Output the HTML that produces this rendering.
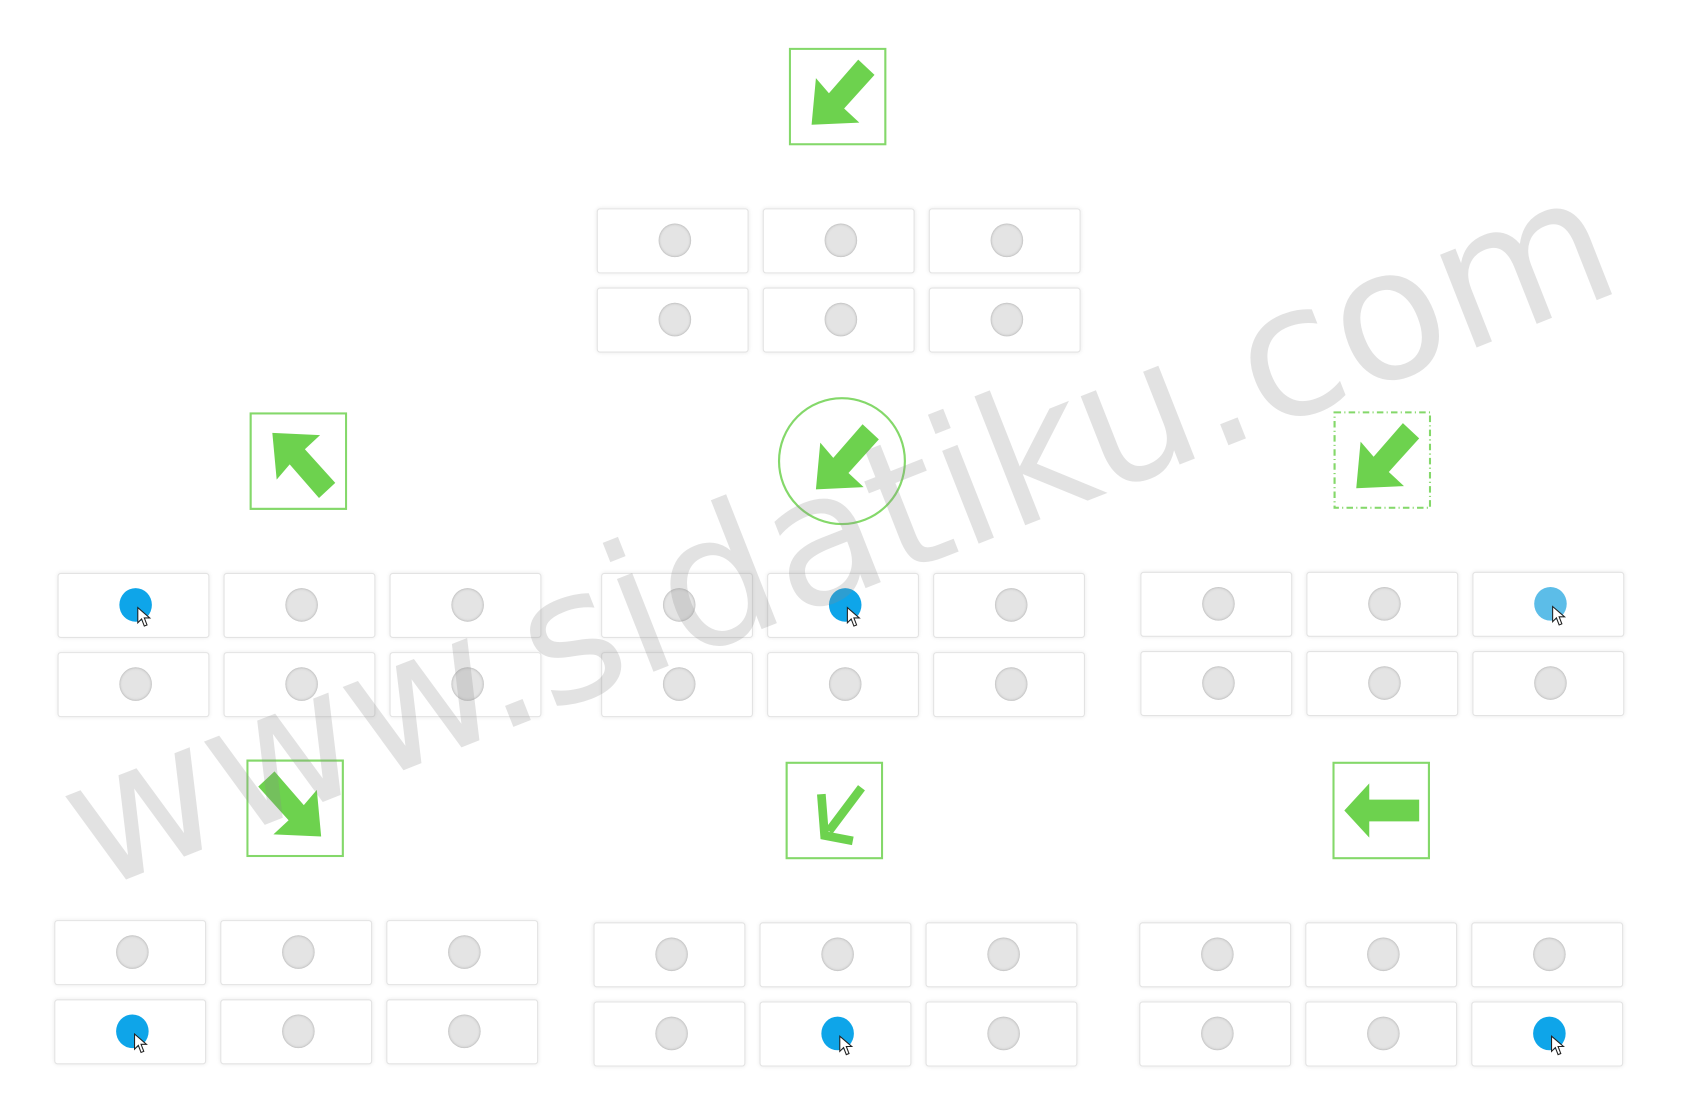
<!DOCTYPE html>
<html><head><meta charset="utf-8"><style>
html,body{margin:0;padding:0;background:#fff;overflow:hidden}
body{width:1702px;height:1119px;position:relative}
#c{position:absolute;left:0;top:0;width:1550px;height:1019px;transform:scale(1.085);transform-origin:0 0}
.cell{position:absolute;width:138px;height:58px;border:1px solid #e3e3e3;border-radius:3px;background:#fff;box-shadow:0 0 4px rgba(0,0,0,0.08)}
.r{position:absolute;left:56px;top:13px;width:30px;height:31px;border-radius:50%;background:radial-gradient(circle at 50% 50%,#e4e4e4 55%,#cfcfcf 100%);box-shadow:inset 0 0 2px rgba(0,0,0,.25)}
.r.on{background:#0ea5e9;box-shadow:none}
.r.lt{background:#5cbde8;box-shadow:none}
.cur{position:absolute;left:72px;top:30px}
.ic{position:absolute;width:90px;height:90px}
#wm{position:absolute;left:66px;top:684px;font-family:"DejaVu Sans","Liberation Sans",sans-serif;font-size:168px;color:rgba(140,140,140,0.25);transform:rotate(-21.5deg);transform-origin:0 50%;white-space:nowrap;line-height:1}
</style></head><body><div id="c">

<svg class="ic" style="left:727px;top:44px" viewBox="0 0 90 90"><rect x="1" y="1" width="88" height="88" fill="none" stroke="#84d86a" stroke-width="2"/><path d="M21,71 L25,28 L37,42 L64,11 L79,25 L51,56 L65,69 Z" fill="#6dd24e"/></svg>
<svg class="ic" style="left:230px;top:380px" viewBox="0 0 90 90"><rect x="1" y="1" width="88" height="88" fill="none" stroke="#84d86a" stroke-width="2"/><path d="M21,19 L25,62 L37,48 L64,79 L79,65 L51,34 L65,21 Z" fill="#6dd24e"/></svg>
<svg class="ic" style="left:716px;top:365px;width:120px;height:120px" viewBox="0 0 120 120"><circle cx="60" cy="60" r="58" fill="none" stroke="#84d86a" stroke-width="2"/><path d="M36,86 L40,43 L52,57 L79,26 L94,40 L66,71 L80,84 Z" fill="#6dd24e"/></svg>
<svg class="ic" style="left:1229px;top:379px" viewBox="0 0 90 90"><rect x="1" y="1" width="88" height="88" fill="none" stroke="#84d86a" stroke-width="2" stroke-dasharray="6 3 1 3"/><path d="M21,71 L25,28 L37,42 L64,11 L79,25 L51,56 L65,69 Z" fill="#6dd24e"/></svg>
<svg class="ic" style="left:227px;top:700px" viewBox="0 0 90 90"><rect x="1" y="1" width="88" height="88" fill="none" stroke="#84d86a" stroke-width="2"/><path d="M69,71 L65,28 L53,42 L26,11 L11,25 L39,56 L25,69 Z" fill="#6dd24e"/></svg>
<svg class="ic" style="left:724px;top:702px" viewBox="0 0 90 90"><rect x="1" y="1" width="88" height="88" fill="none" stroke="#84d86a" stroke-width="2"/><path d="M70,24 L40,64 M33,30 L36,68 L62,73" fill="none" stroke="#6dd24e" stroke-width="8"/></svg>
<svg class="ic" style="left:1228px;top:702px" viewBox="0 0 90 90"><rect x="1" y="1" width="88" height="88" fill="none" stroke="#84d86a" stroke-width="2"/><path d="M11,45 L34,20 L34,35 L80,35 L80,55 L34,55 L34,70 Z" fill="#6dd24e"/></svg>

<div class="cell" style="left:550px;top:192px"><div class="r"></div></div>
<div class="cell" style="left:703px;top:192px"><div class="r"></div></div>
<div class="cell" style="left:856px;top:192px"><div class="r"></div></div>
<div class="cell" style="left:550px;top:265px"><div class="r"></div></div>
<div class="cell" style="left:703px;top:265px"><div class="r"></div></div>
<div class="cell" style="left:856px;top:265px"><div class="r"></div></div>

<div class="cell" style="left:53px;top:528px"><div class="r on"></div><svg class="cur" width="14" height="20" viewBox="0 0 14 20"><path d="M1,1 L1,15 L4.5,11.5 L7,18 L9.5,17 L7,10.5 L12,10.5 Z" fill="#fff" stroke="#222" stroke-width="1"/></svg></div>
<div class="cell" style="left:206px;top:528px"><div class="r"></div></div>
<div class="cell" style="left:359px;top:528px"><div class="r"></div></div>
<div class="cell" style="left:53px;top:601px"><div class="r"></div></div>
<div class="cell" style="left:206px;top:601px"><div class="r"></div></div>
<div class="cell" style="left:359px;top:601px"><div class="r"></div></div>
<div class="cell" style="left:554px;top:528px"><div class="r"></div></div>
<div class="cell" style="left:707px;top:528px"><div class="r on"></div><svg class="cur" width="14" height="20" viewBox="0 0 14 20"><path d="M1,1 L1,15 L4.5,11.5 L7,18 L9.5,17 L7,10.5 L12,10.5 Z" fill="#fff" stroke="#222" stroke-width="1"/></svg></div>
<div class="cell" style="left:860px;top:528px"><div class="r"></div></div>
<div class="cell" style="left:554px;top:601px"><div class="r"></div></div>
<div class="cell" style="left:707px;top:601px"><div class="r"></div></div>
<div class="cell" style="left:860px;top:601px"><div class="r"></div></div>
<div class="cell" style="left:1051px;top:527px"><div class="r"></div></div>
<div class="cell" style="left:1204px;top:527px"><div class="r"></div></div>
<div class="cell" style="left:1357px;top:527px"><div class="r lt"></div><svg class="cur" width="14" height="20" viewBox="0 0 14 20"><path d="M1,1 L1,15 L4.5,11.5 L7,18 L9.5,17 L7,10.5 L12,10.5 Z" fill="#fff" stroke="#222" stroke-width="1"/></svg></div>
<div class="cell" style="left:1051px;top:600px"><div class="r"></div></div>
<div class="cell" style="left:1204px;top:600px"><div class="r"></div></div>
<div class="cell" style="left:1357px;top:600px"><div class="r"></div></div>

<div class="cell" style="left:50px;top:848px"><div class="r"></div></div>
<div class="cell" style="left:203px;top:848px"><div class="r"></div></div>
<div class="cell" style="left:356px;top:848px"><div class="r"></div></div>
<div class="cell" style="left:50px;top:921px"><div class="r on"></div><svg class="cur" width="14" height="20" viewBox="0 0 14 20"><path d="M1,1 L1,15 L4.5,11.5 L7,18 L9.5,17 L7,10.5 L12,10.5 Z" fill="#fff" stroke="#222" stroke-width="1"/></svg></div>
<div class="cell" style="left:203px;top:921px"><div class="r"></div></div>
<div class="cell" style="left:356px;top:921px"><div class="r"></div></div>
<div class="cell" style="left:547px;top:850px"><div class="r"></div></div>
<div class="cell" style="left:700px;top:850px"><div class="r"></div></div>
<div class="cell" style="left:853px;top:850px"><div class="r"></div></div>
<div class="cell" style="left:547px;top:923px"><div class="r"></div></div>
<div class="cell" style="left:700px;top:923px"><div class="r on"></div><svg class="cur" width="14" height="20" viewBox="0 0 14 20"><path d="M1,1 L1,15 L4.5,11.5 L7,18 L9.5,17 L7,10.5 L12,10.5 Z" fill="#fff" stroke="#222" stroke-width="1"/></svg></div>
<div class="cell" style="left:853px;top:923px"><div class="r"></div></div>
<div class="cell" style="left:1050px;top:850px"><div class="r"></div></div>
<div class="cell" style="left:1203px;top:850px"><div class="r"></div></div>
<div class="cell" style="left:1356px;top:850px"><div class="r"></div></div>
<div class="cell" style="left:1050px;top:923px"><div class="r"></div></div>
<div class="cell" style="left:1203px;top:923px"><div class="r"></div></div>
<div class="cell" style="left:1356px;top:923px"><div class="r on"></div><svg class="cur" width="14" height="20" viewBox="0 0 14 20"><path d="M1,1 L1,15 L4.5,11.5 L7,18 L9.5,17 L7,10.5 L12,10.5 Z" fill="#fff" stroke="#222" stroke-width="1"/></svg></div>

<div id="wm">www.sidatiku.com</div>
</div>
</body></html>
